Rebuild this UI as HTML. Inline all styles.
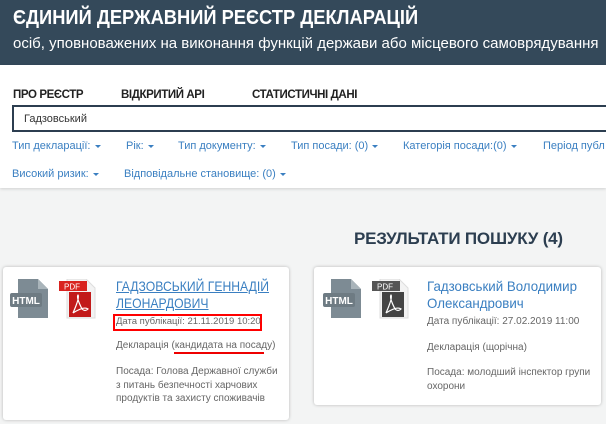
<!DOCTYPE html>
<html><head><meta charset="utf-8"><style>
*{margin:0;padding:0;box-sizing:border-box}
body{width:606px;height:424px;overflow:hidden;background:#f3f4f4;font-family:"Liberation Sans","DejaVu Sans",sans-serif;position:relative}
.hdr{position:absolute;left:0;top:0;width:606px;height:65px;background:#34495a;color:#fff}
.hdr .t{position:absolute;left:13px;top:7px;font-size:20px;font-weight:bold;transform:scaleX(0.915);transform-origin:0 0;white-space:nowrap}
.hdr .s{position:absolute;left:13px;top:35px;font-size:15px;white-space:nowrap}
.nav{position:absolute;left:0;top:65px;width:606px;height:123px;background:#fff;box-shadow:0 1px 3px rgba(0,0,0,.15)}
.m{position:absolute;top:89px;font-size:11.5px;color:#222;font-weight:bold;letter-spacing:-0.4px}
.inp{position:absolute;left:12px;top:105px;width:600px;height:27px;border:2px solid #2c3e50;font-size:11px;color:#333;padding:6px 10px}
.f{position:absolute;font-size:11px;color:#3a7fc1}
.f:after{content:"";display:inline-block;margin-left:4px;border-left:3px solid transparent;border-right:3px solid transparent;border-top:3px solid #3a7fc1;vertical-align:middle}
.rt{position:absolute;left:354px;top:229px;font-size:17px;font-weight:bold;color:#2c3e50;letter-spacing:-0.2px}
.card{position:absolute;background:#fff;border-radius:3px;box-shadow:0 0 3px rgba(0,0,0,.25)}
.name{position:absolute;font-size:14px;color:#3a7fc1;line-height:17px;transform-origin:0 0;white-space:nowrap}
.g{position:absolute;font-size:10px;color:#666;line-height:16px}
</style></head><body>
<div class="hdr"><div class="t">ЄДИНИЙ ДЕРЖАВНИЙ РЕЄСТР ДЕКЛАРАЦІЙ</div><div class="s">осіб, уповноважених на виконання функцій держави або місцевого самоврядування</div></div>
<div class="nav"></div>
<div class="m" style="left:13px">ПРО РЕЄСТР</div>
<div class="m" style="left:121px">ВІДКРИТИЙ API</div>
<div class="m" style="left:252px">СТАТИСТИЧНІ ДАНІ</div>
<div class="inp">Гадзовський</div>
<div class="f" style="left:12px;top:140px">Тип декларації:</div>
<div class="f" style="left:126px;top:140px">Рік:</div>
<div class="f" style="left:178px;top:140px">Тип документу:</div>
<div class="f" style="left:291px;top:140px">Тип посади: (0)</div>
<div class="f" style="left:403px;top:140px">Категорія посади:(0)</div>
<div class="f" style="left:543px;top:140px;white-space:nowrap">Період публ</div>
<div class="f" style="left:12px;top:168px">Високий ризик:</div>
<div class="f" style="left:124px;top:168px">Відповідальне становище: (0)</div>
<div class="rt">РЕЗУЛЬТАТИ ПОШУКУ (4)</div>

<div class="card" style="left:3px;top:267px;width:286px;height:153px"></div>
<svg style="position:absolute;left:10px;top:279px" width="40" height="40"><path d="M8 0H28L38 10V39H8Z" fill="#7d8b94"/><path d="M28 0V10H38Z" fill="#a9b4ba"/><rect x="0" y="14" width="32" height="14" rx="2" fill="#6e7b83"/><text x="16" y="25" font-size="10" font-weight="bold" fill="#fff" text-anchor="middle" font-family="Liberation Sans">HTML</text></svg>
<svg style="position:absolute;left:59px;top:279px" width="38" height="40"><path d="M8 0H27L36 9V39H8Z" fill="#f3f3f3" stroke="#ddd"/><rect x="0" y="2" width="28" height="10" fill="#d9231f"/><text x="13" y="10.5" font-size="8" fill="#fff" text-anchor="middle" font-family="Liberation Sans">PDF</text><rect x="10" y="13" width="22" height="25" fill="#c21a1a"/><path d="M14 34Q21 18 19 16Q17 18 23 30Q26 33 29 30Q25 27 14 34" stroke="#fff" fill="none" stroke-width="1.2"/></svg>
<div class="name" style="left:116px;top:278px;text-decoration:underline;transform:scaleX(0.87)">ГАДЗОВСЬКИЙ ГЕННАДІЙ<br>ЛЕОНАРДОВИЧ</div>
<div style="position:absolute;left:113px;top:314px;width:149px;height:17px;border:2px solid #f00"></div>
<div class="g" style="left:116px;top:314px;font-size:9.5px">Дата публікації: 21.11.2019 10:20</div>
<div class="g" style="left:116px;top:338px">Декларація (кандидата на посаду)</div>
<div style="position:absolute;left:174px;top:352px;width:90px;height:2px;background:#e00"></div>
<div class="g" style="left:116px;top:365px;width:165px;line-height:13.5px">Посада: Голова Державної служби з питань безпечності харчових продуктів та захисту споживачів</div>

<div class="card" style="left:314px;top:267px;width:287px;height:138px"></div>
<svg style="position:absolute;left:323px;top:279px" width="40" height="40"><path d="M8 0H28L38 10V39H8Z" fill="#7d8b94"/><path d="M28 0V10H38Z" fill="#a9b4ba"/><rect x="0" y="14" width="32" height="14" rx="2" fill="#6e7b83"/><text x="16" y="25" font-size="10" font-weight="bold" fill="#fff" text-anchor="middle" font-family="Liberation Sans">HTML</text></svg>
<svg style="position:absolute;left:372px;top:279px" width="38" height="40"><path d="M8 0H27L36 9V39H8Z" fill="#f3f3f3" stroke="#ddd"/><rect x="0" y="2" width="28" height="10" fill="#555"/><text x="13" y="10.5" font-size="8" fill="#fff" text-anchor="middle" font-family="Liberation Sans">PDF</text><rect x="10" y="13" width="22" height="25" fill="#444"/><path d="M14 34Q21 18 19 16Q17 18 23 30Q26 33 29 30Q25 27 14 34" stroke="#fff" fill="none" stroke-width="1.2"/></svg>
<div class="name" style="left:427px;top:278px;transform:scaleX(0.95)">Гадзовський Володимир<br>Олександрович</div>
<div class="g" style="left:427px;top:314px">Дата публікації: 27.02.2019 11:00</div>
<div class="g" style="left:427px;top:340px">Декларація (щорічна)</div>
<div class="g" style="left:427px;top:366px;width:170px;line-height:13.5px">Посада: молодший інспектор групи охорони</div>
</body></html>
